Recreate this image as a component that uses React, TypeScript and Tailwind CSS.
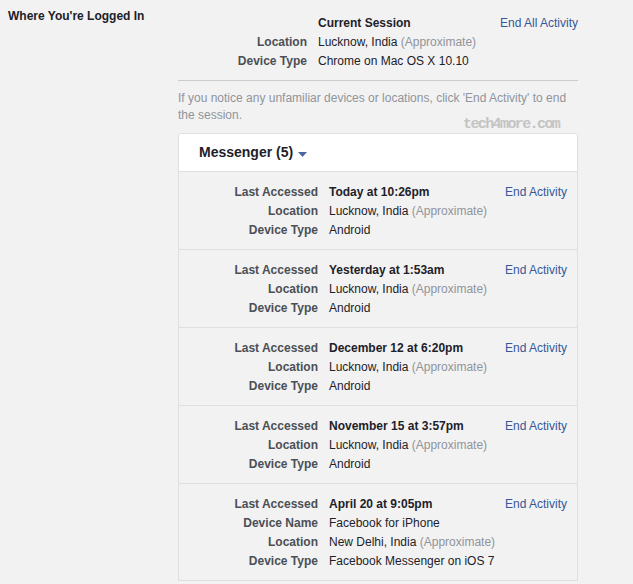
import React from "react";

type Row = { label: string; value: React.ReactNode; bold?: boolean };

const Approx = () => <span className="text-[#90949c]"> (Approximate)</span>;

const sessions: Row[][] = [
  [
    { label: "Last Accessed", value: "Today at 10:26pm", bold: true },
    { label: "Location", value: <>Lucknow, India<Approx /></> },
    { label: "Device Type", value: "Android" },
  ],
  [
    { label: "Last Accessed", value: "Yesterday at 1:53am", bold: true },
    { label: "Location", value: <>Lucknow, India<Approx /></> },
    { label: "Device Type", value: "Android" },
  ],
  [
    { label: "Last Accessed", value: "December 12 at 6:20pm", bold: true },
    { label: "Location", value: <>Lucknow, India<Approx /></> },
    { label: "Device Type", value: "Android" },
  ],
  [
    { label: "Last Accessed", value: "November 15 at 3:57pm", bold: true },
    { label: "Location", value: <>Lucknow, India<Approx /></> },
    { label: "Device Type", value: "Android" },
  ],
  [
    { label: "Last Accessed", value: "April 20 at 9:05pm", bold: true },
    { label: "Device Name", value: "Facebook for iPhone" },
    { label: "Location", value: <>New Delhi, India<Approx /></> },
    { label: "Device Type", value: "Facebook Messenger on iOS 7" },
  ],
];

export default function App() {
  return (
    <div
      className="relative w-[633px] h-[584px] overflow-hidden bg-[#f2f2f2] text-[12px] text-[#1d2129]"
      style={{ fontFamily: '"Liberation Sans", Arial, sans-serif' }}
    >
      <div className="flex">
        <div className="w-[178px] shrink-0 pl-[8px] pt-[9px] font-bold leading-[15px] text-[#1d2129]">
          Where You're Logged In
        </div>
        <div className="w-[400px] shrink-0 pt-[14px]">
          {/* current session */}
          <div className="flex border-b border-[#cccccc] pb-[9px]">
            <div className="flex flex-col w-[129px] shrink-0 text-right font-bold text-[#4b4f56] leading-[19px]">
              <span>&nbsp;</span>
              <span>Location</span>
              <span>Device Type</span>
            </div>
            <div className="flex flex-col flex-1 pl-[11px] leading-[19px]">
              <span className="font-bold">Current Session</span>
              <span>
                Lucknow, India<Approx />
              </span>
              <span>Chrome on Mac OS X 10.10</span>
            </div>
            <div className="leading-[19px] text-[#365899]">End All Activity</div>
          </div>
          <p className="pt-[9px] leading-[17px] text-[#90949c]">
            If you notice any unfamiliar devices or locations, click 'End Activity' to end the session.
          </p>
          {/* card */}
          <div className="mt-[9px] border border-[#dddfe2] rounded-t-[3px] overflow-hidden">
            <div className="flex items-start h-[38px] bg-white pl-[20px] pt-[10px] border-b border-[#dddfe2]">
              <span className="text-[14px] leading-[17px] font-bold text-[#1d2129]">Messenger (5)</span>
              <svg width="9" height="5" viewBox="0 0 9 5" className="ml-[5px] mt-[8px]">
                <path d="M0 0 H9 L4.5 5 Z" fill="#4b67a1" />
              </svg>
            </div>
            {sessions.map((rows, i) => (
              <div
                key={i}
                className={
                  "flex pt-[11px] pb-[9px] pr-[10px] bg-[#f2f2f2] " +
                  (i < sessions.length - 1 ? "border-b border-[#dddfe2]" : "")
                }
              >
                <div className="flex flex-col w-[139px] shrink-0 text-right font-bold text-[#4b4f56] leading-[19px]">
                  {rows.map((r) => (
                    <span key={r.label}>{r.label}</span>
                  ))}
                </div>
                <div className="flex flex-col flex-1 pl-[11px] leading-[19px]">
                  {rows.map((r) => (
                    <span key={r.label} className={r.bold ? "font-bold" : ""}>
                      {r.value}
                    </span>
                  ))}
                </div>
                <div className="leading-[19px] text-[#365899]">End Activity</div>
              </div>
            ))}
          </div>
        </div>
      </div>
      <div
        className="absolute left-[463px] top-[116px] text-[15px] leading-[18px] tracking-[-1.6px] text-[#c4c4c4] font-bold"
        style={{ fontFamily: '"Liberation Mono", monospace' }}
      >
        tech4more.com
      </div>
    </div>
  );
}
